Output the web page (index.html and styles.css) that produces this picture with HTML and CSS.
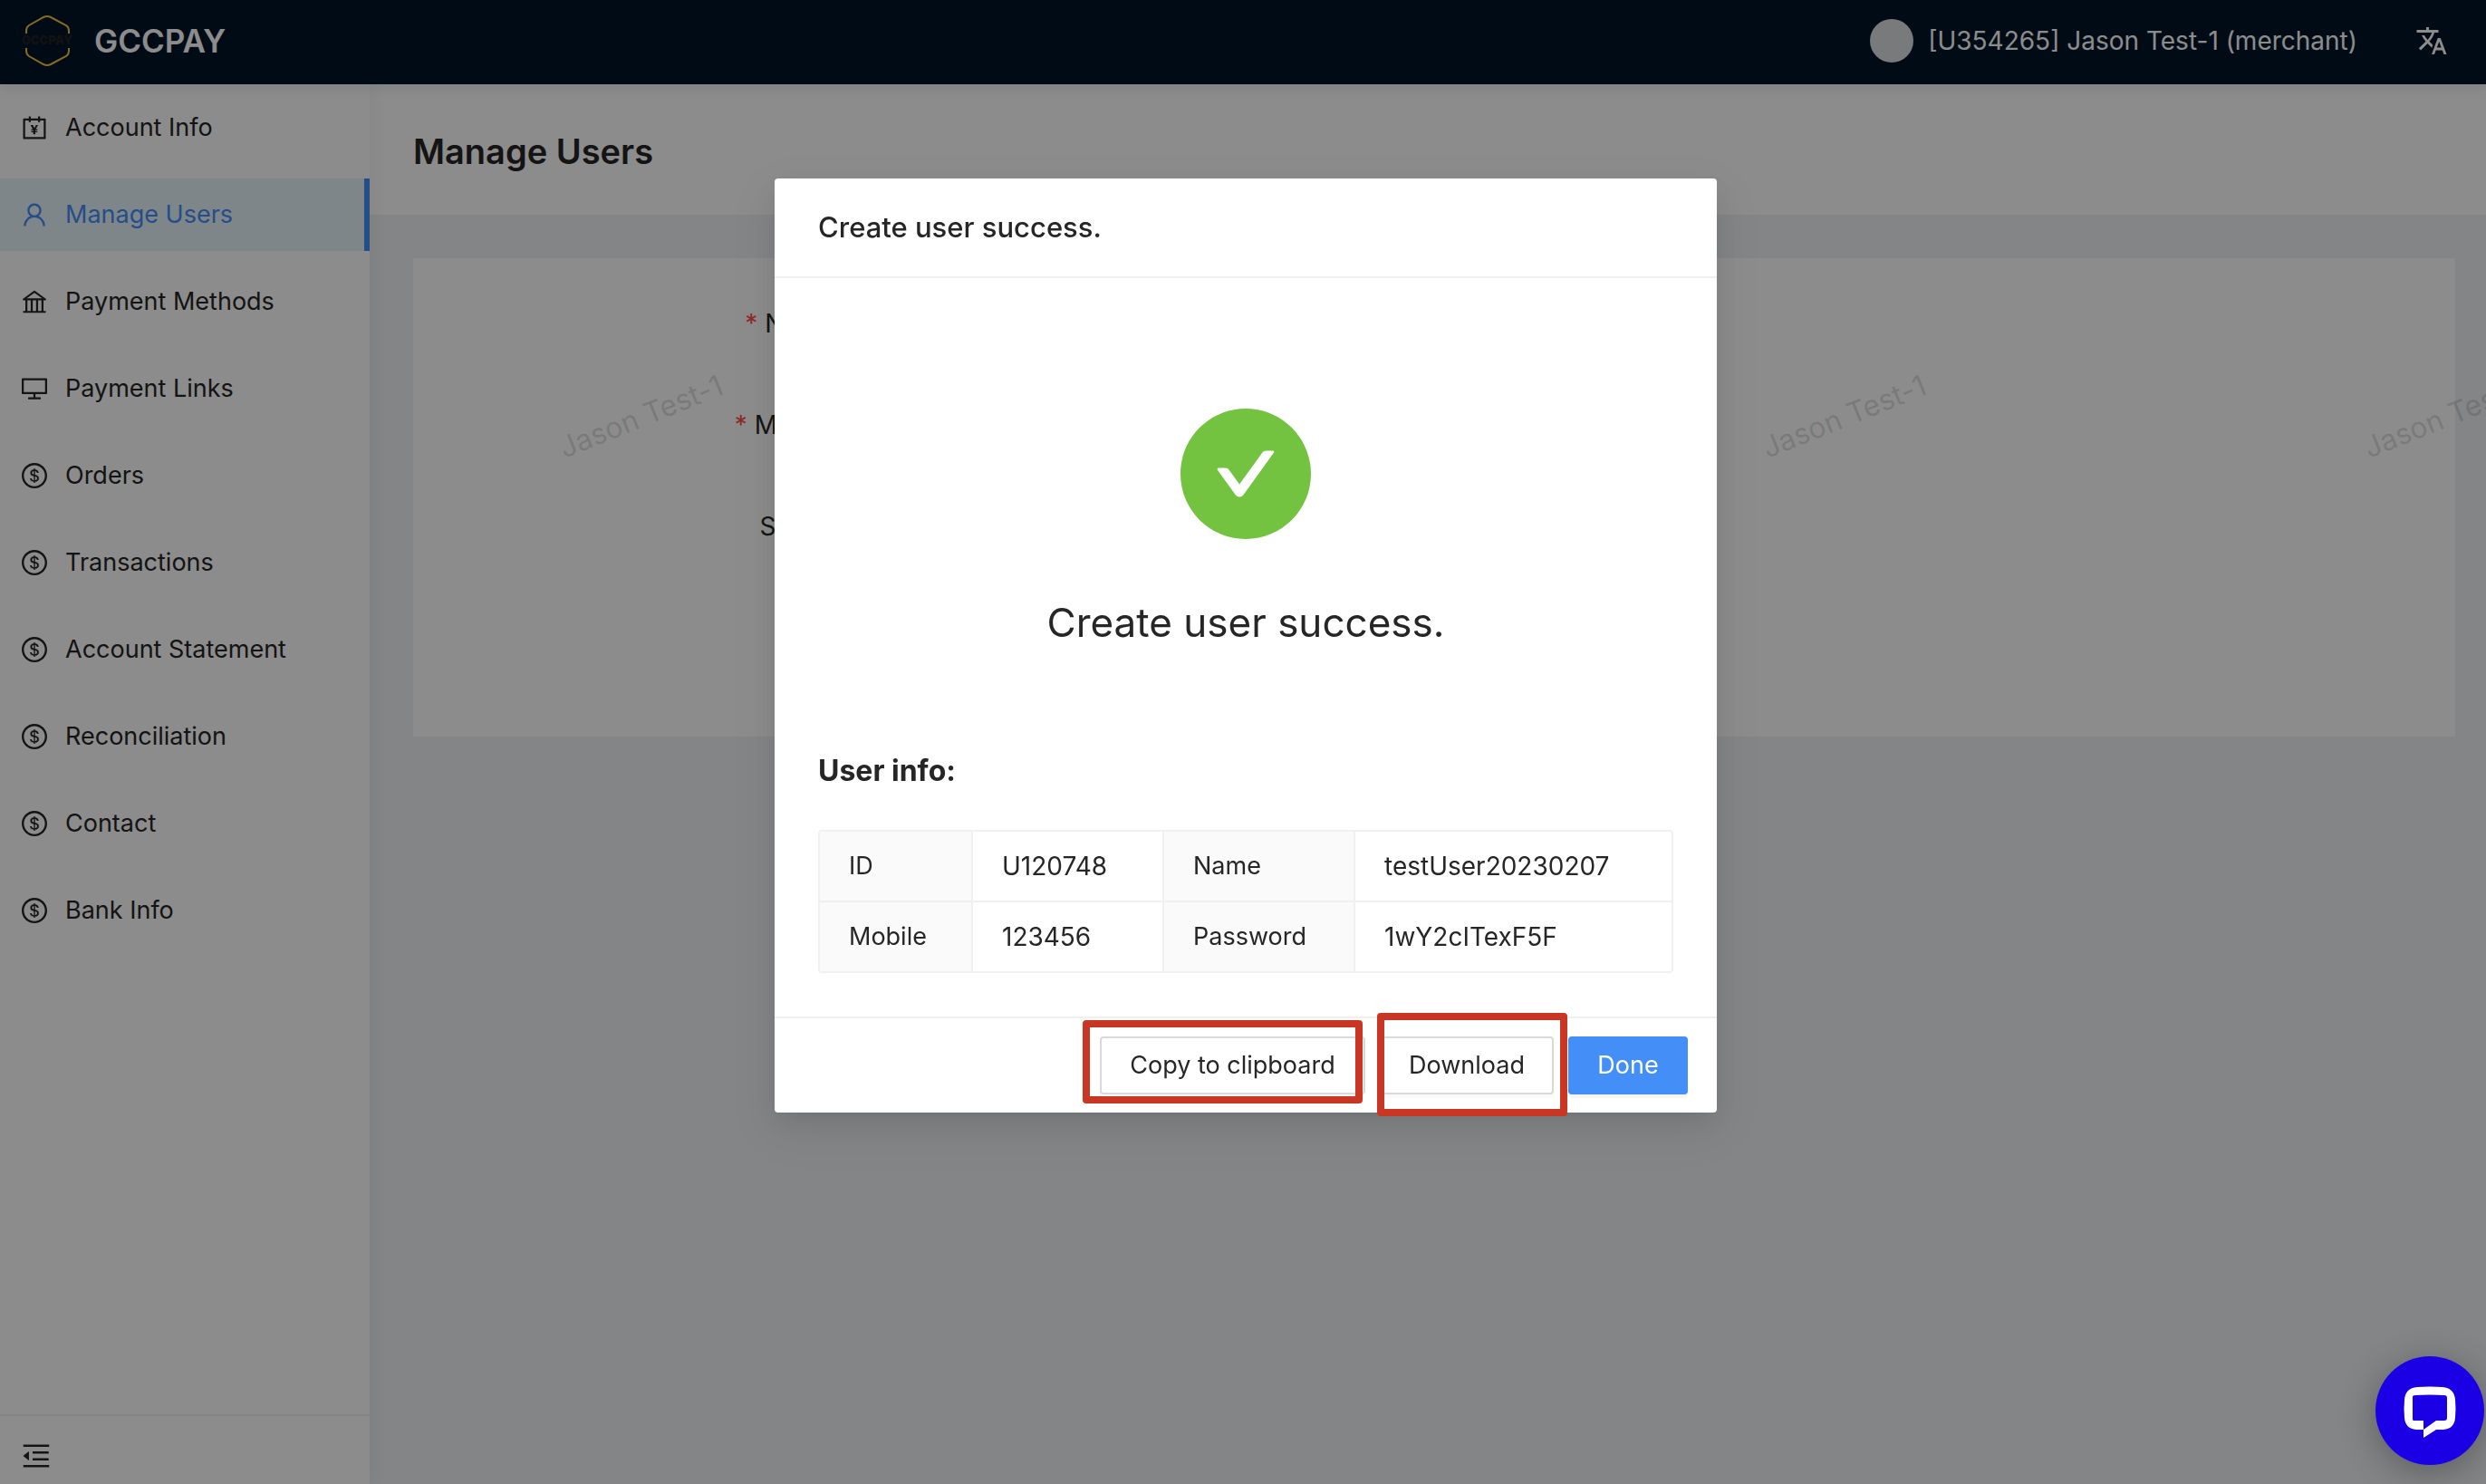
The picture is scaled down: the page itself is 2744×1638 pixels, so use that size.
FILE: index.html
```html
<!DOCTYPE html>
<html lang="en">
<head>
<meta charset="utf-8">
<meta name="viewport" content="width=device-width, initial-scale=1">
<title>GCCPAY - Manage Users</title>
<link rel="stylesheet" href="styles.css">
</head>
<body>
<svg class="sprite" aria-hidden="true">
  <symbol id="i-book" viewBox="64 64 896 896"><path fill-rule="evenodd" d="M880 184H712v-64c0-4.400-3.600-8-8-8h-56c-4.400 0-8 3.600-8 8v64H384v-64c0-4.400-3.600-8-8-8h-56c-4.400 0-8 3.600-8 8v64H144c-17.700 0-32 14.300-32 32v664c0 17.700 14.300 32 32 32h736c17.700 0 32-14.300 32-32V216c0-17.700-14.300-32-32-32zm-40 656H184V256h128v48c0 4.400 3.600 8 8 8h56c4.400 0 8-3.600 8-8v-48h256v48c0 4.400 3.600 8 8 8h56c4.400 0 8-3.600 8-8v-48h128v584z"/><path d="M639.500 414h-65c-3 0-5.800 1.700-7.100 4.400L514.700 518.600h-2.900l-52.700-100.200a8 8 0 00-7.100-4.400h-66.700c-4.400 0-8 3.600-8 8 0 1.300.3 2.700 1 3.800l72.700 131.400h-45.200c-4.400 0-8 3.600-8 8v27.100c0 4.400 3.600 8 8 8h63.800v30.600h-63.800c-4.400 0-8 3.600-8 8V666c0 4.400 3.600 8 8 8h63.800v65.200c0 4.400 3.600 8 8 8h58.800c4.400 0 8-3.600 8-8V674h64.200c4.400 0 8-3.600 8-8v-27.100c0-4.400-3.600-8-8-8h-64.200v-30.600h64.200c4.400 0 8-3.600 8-8v-27.100c0-4.400-3.600-8-8-8h-45.600l72.900-131.300c2.100-3.900.7-11.900-6.300-11.900z"/></symbol>
  <symbol id="i-user" viewBox="64 64 896 896"><path d="M858.500 763.600a374 374 0 00-80.600-119.500 375.630 375.630 0 00-119.500-80.600c-.4-.2-.8-.3-1.200-.5C719.500 518 760 444.700 760 362c0-137-111-248-248-248S264 225 264 362c0 82.700 40.500 156 102.800 201.100-.4.2-.8.3-1.200.5-44.800 18.900-85 46-119.500 80.600a375.630 375.630 0 00-80.600 119.500A371.700 371.700 0 00136 901.800a8 8 0 008 8.200h60c4.400 0 7.900-3.500 8-7.800 2-77.200 33-149.500 87.800-204.300 56.700-56.700 132-87.900 212.200-87.900s155.500 31.200 212.200 87.900C779 752.700 810 825 812 902.200c.1 4.400 3.600 7.800 8 7.800h60a8 8 0 008-8.200c-1-47.800-10.900-94.300-29.500-138.200zM512 534c-45.900 0-89.100-17.900-121.600-50.400S340 407.900 340 362c0-45.900 17.900-89.100 50.400-121.600S466.100 190 512 190s89.100 17.900 121.600 50.400S684 316.100 684 362c0 45.900-17.900 89.100-50.400 121.600S557.900 534 512 534z"/></symbol>
  <symbol id="i-bank" viewBox="64 64 896 896"><path fill-rule="evenodd" d="M894 462c30.900 0 43.800-39.700 18.700-58L530.800 126.200a31.810 31.810 0 00-37.600 0L111.300 404c-25.100 18.200-12.200 58 18.800 58H192v374h-72c-4.400 0-8 3.600-8 8v52c0 4.400 3.600 8 8 8h784c4.400 0 8-3.600 8-8v-52c0-4.400-3.600-8-8-8h-72V462h62zM512 196.700l271.100 197.200H240.900L512 196.700zM264 462h117v374H264V462zm189 0h117v374H453V462zm307 374H642V462h118v374z"/></symbol>
  <symbol id="i-desktop" viewBox="64 64 896 896"><path fill-rule="evenodd" d="M928 140H96c-17.700 0-32 14.300-32 32v496c0 17.700 14.300 32 32 32h380v112H304c-8.800 0-16 7.200-16 16v48c0 4.400 3.600 8 8 8h432c4.400 0 8-3.600 8-8v-48c0-8.800-7.200-16-16-16H548V700h380c17.700 0 32-14.300 32-32V172c0-17.700-14.300-32-32-32zm-40 488H136V212h752v416z"/></symbol>
  <symbol id="i-dollar" viewBox="64 64 896 896"><path d="M512 64C264.600 64 64 264.600 64 512s200.600 448 448 448 448-200.600 448-448S759.400 64 512 64zm0 820c-205.400 0-372-166.600-372-372s166.600-372 372-372 372 166.600 372 372-166.600 372-372 372zm47.700-395.200l-25.400-5.900V348.600c38 5.200 61.500 29 65.500 58.200.5 4 3.900 6.900 7.900 6.900h44.900c4.700 0 8.400-4.100 8-8.800-6.100-62.300-57.400-102.300-125.900-109.200V263c0-4.400-3.600-8-8-8h-28.100c-4.400 0-8 3.600-8 8v33c-70.800 6.900-126.200 46-126.200 119 0 67.600 49.800 100.200 102.100 112.700l24.700 6.300v142.700c-44.200-5.900-69-29.500-74.100-61.300-.6-3.800-4-6.600-7.900-6.600H363c-4.700 0-8.400 4-8 8.700 4.500 55 46.200 105.600 135.200 112.100V761c0 4.400 3.600 8 8 8h28.400c4.400 0 8-3.600 8-8.100l-.2-31.700c78.300-6.900 134.300-48.800 134.300-124-.1-69.400-44.200-100.400-109-116.400zm-68.600-16.200c-5.600-1.600-10.300-3.100-15-5-33.800-12.200-49.500-31.900-49.500-57.300 0-36.300 27.500-57 64.500-61.700v124zM534.300 677V543.300c3.100.9 5.900 1.600 8.800 2.200 47.300 14.400 63.200 34.400 63.200 65.100 0 39.100-29.400 62.600-72 66.400z"/></symbol>
  <symbol id="i-fold" viewBox="64 64 896 896"><path d="M408 442h480c4.400 0 8-3.600 8-8v-56c0-4.400-3.600-8-8-8H408c-4.400 0-8 3.600-8 8v56c0 4.400 3.600 8 8 8zm-8 204c0 4.400 3.600 8 8 8h480c4.400 0 8-3.600 8-8v-56c0-4.400-3.600-8-8-8H408c-4.400 0-8 3.600-8 8v56zm504-486H120c-4.400 0-8 3.600-8 8v56c0 4.400 3.600 8 8 8h784c4.400 0 8-3.600 8-8v-56c0-4.400-3.600-8-8-8zm0 632H120c-4.400 0-8 3.600-8 8v56c0 4.400 3.600 8 8 8h784c4.400 0 8-3.600 8-8v-56c0-4.400-3.600-8-8-8zM115.400 518.900L271.700 642c5.800 4.600 14.400.5 14.400-6.900V388.900c0-7.400-8.500-11.500-14.400-6.900L115.400 505.100a8.740 8.740 0 000 13.800z"/></symbol>
</svg>

<div class="app">
  <header class="topbar">
    <a class="brand" href="#">
      <svg class="brand-logo" viewBox="0 0 56 56" aria-hidden="true">
        <g fill="none" stroke="#f0c63f" stroke-width="2">
          <path d="M5 20V17Q5 13 8 11L24 2Q28 0 32 2L49 11Q52 13 52 17V20"/>
          <path d="M5 36V39Q5 43 8 45L24 54Q28 56 32 54L49 45Q52 43 52 39V36"/>
        </g>
        <text class="brand-mark" x="28" y="32" text-anchor="middle">GCCPAY</text>
      </svg>
      <span class="brand-name">GCCPAY</span>
    </a>
    <div class="account">
      <span class="avatar"></span>
      <span class="account-name">[U354265] Jason Test-1 (merchant)</span>
      <button class="icon-button" type="button" aria-label="Language">
        <svg class="icon-lang" viewBox="0 0 24 24" aria-hidden="true"><path d="M12.870 15.070l-2.540-2.510.03-.03c1.740-1.940 2.980-4.170 3.710-6.530H17V4h-7V2H8v2H1v1.990h11.170C11.500 7.920 10.440 9.750 9 11.350 8.070 10.320 7.300 9.190 6.690 8h-2c.73 1.630 1.730 3.170 2.980 4.560l-5.090 5.020L4 19l5-5 3.110 3.110.76-2.040zM18.500 10h-2L12 22h2l1.120-3h4.750L21 22h2l-4.500-12zm-2.620 7l1.620-4.330L19.120 17h-3.240z"/></svg>
      </button>
    </div>
  </header>

  <aside class="sidebar">
    <nav class="menu">
      <a class="menu-item" href="#"><svg class="icon"><use href="#i-book"/></svg>Account Info</a>
      <a class="menu-item active" href="#"><svg class="icon"><use href="#i-user"/></svg>Manage Users</a>
      <a class="menu-item" href="#"><svg class="icon"><use href="#i-bank"/></svg>Payment Methods</a>
      <a class="menu-item" href="#"><svg class="icon"><use href="#i-desktop"/></svg>Payment Links</a>
      <a class="menu-item" href="#"><svg class="icon"><use href="#i-dollar"/></svg>Orders</a>
      <a class="menu-item" href="#"><svg class="icon"><use href="#i-dollar"/></svg>Transactions</a>
      <a class="menu-item" href="#"><svg class="icon"><use href="#i-dollar"/></svg>Account Statement</a>
      <a class="menu-item" href="#"><svg class="icon"><use href="#i-dollar"/></svg>Reconciliation</a>
      <a class="menu-item" href="#"><svg class="icon"><use href="#i-dollar"/></svg>Contact</a>
      <a class="menu-item" href="#"><svg class="icon"><use href="#i-dollar"/></svg>Bank Info</a>
    </nav>
    <div class="sidebar-foot">
      <button class="icon-button" type="button" aria-label="Collapse menu"><svg class="icon-fold"><use href="#i-fold"/></svg></button>
    </div>
  </aside>

  <main class="main">
    <div class="page-head"><h1 class="page-title">Manage Users</h1></div>
    <div class="content">
      <form class="card">
        <div class="field"><label class="field-label required" for="name">Name:</label><input class="field-input" id="name" type="text"></div>
        <div class="field"><label class="field-label required" for="mobile">Mobile:</label><input class="field-input" id="mobile" type="text"></div>
        <div class="field"><label class="field-label" for="status">Status:</label><input class="field-input" id="status" type="text"></div>
      </form>
      <div class="watermark" aria-hidden="true">
        <span class="watermark-cell"><span class="watermark-text">Jason Test-1</span></span>
        <span class="watermark-cell"><span class="watermark-text">Jason Test-1</span></span>
        <span class="watermark-cell"><span class="watermark-text">Jason Test-1</span></span>
        <span class="watermark-cell"><span class="watermark-text">Jason Test-1</span></span>
      </div>
    </div>
  </main>
</div>

<div class="mask">
  <section class="modal" role="dialog" aria-modal="true" aria-labelledby="modal-title">
    <header class="modal-head"><h2 class="modal-title" id="modal-title">Create user success.</h2></header>
    <div class="modal-body">
      <div class="result">
        <svg class="result-icon" viewBox="64 64 896 896" aria-hidden="true"><path d="M512 64C264.600 64 64 264.600 64 512s200.600 448 448 448 448-200.600 448-448S759.400 64 512 64zm193.500 301.700l-210.600 292a31.800 31.800 0 01-51.700 0L318.500 484.900c-3.800-5.300 0-12.700 6.500-12.700h46.900c10.200 0 19.900 4.900 25.900 13.300l71.200 98.800 157.200-218c6-8.300 15.600-13.300 25.900-13.300H699c6.500 0 10.300 7.400 6.500 12.700z"/></svg>
        <p class="result-title">Create user success.</p>
      </div>
      <h3 class="info-title">User info:</h3>
      <table class="info">
        <colgroup><col class="col-a"><col class="col-b"><col class="col-b"><col></colgroup>
        <tbody>
          <tr><th scope="row">ID</th><td>U120748</td><th scope="row">Name</th><td>testUser20230207</td></tr>
          <tr><th scope="row">Mobile</th><td>123456</td><th scope="row">Password</th><td>1wY2cITexF5F</td></tr>
        </tbody>
      </table>
    </div>
    <footer class="modal-foot">
      <span class="mark mark-copy"><button class="btn btn-copy" type="button">Copy to clipboard</button></span>
      <span class="mark mark-download"><button class="btn btn-download" type="button">Download</button></span>
      <button class="btn btn-primary" type="button">Done</button>
    </footer>
  </section>
</div>

<button class="chat" type="button" aria-label="Chat">
  <svg class="chat-icon" viewBox="0 0 120 120" aria-hidden="true"><path fill-rule="evenodd" d="M46 34Q60 33 74 34Q87 35 88 48Q89 58 88 68Q87 80 75 81H67L53 90V71H42Q41 71 41 69V45Q41 43 44 43Q60 42 76 43Q79 43 79 46V68Q79 71 76 71H67L53 81H45Q33 80 32 68Q31 58 32 48Q33 35 46 34Z"/></svg>
</button>
</body>
</html>
```
FILE: styles.css
```css
* { box-sizing: border-box; }

body {
  margin: 0;
  background: #f0f2f5;
  color: #262626;
  font-family: Inter, "Noto Sans", sans-serif;
  font-size: 28px;
  line-height: 44px;
}

h1, h2, h3, p { margin: 0; }
a { color: inherit; text-decoration: none; }
button, input { font: inherit; color: inherit; }
svg { display: block; fill: currentColor; }
.sprite { display: none; }

.app {
  display: grid;
  grid-template: auto 1fr / 408px minmax(0, 1fr);
  min-height: 100vh;
}

/* Top bar */
.topbar {
  grid-column: 1 / -1;
  z-index: 2;
  display: flex;
  align-items: center;
  justify-content: space-between;
  height: 93px;
  padding: 0 42px 3px 24px;
  background: #001529;
  color: #fff;
  box-shadow: 0 2px 16px rgba(0, 21, 41, .12);
}
.brand { display: flex; align-items: center; gap: 24px; }
.brand-logo { width: 56px; height: 56px; overflow: visible; }
.brand-mark { font-size: 13px; font-weight: 900; fill: #231f20; }
.brand-name { font-size: 35px; font-weight: 600; }
.account { display: flex; align-items: center; gap: 16px; }
.avatar { width: 48px; height: 48px; border-radius: 50%; background: #dddee0; }
.account-name { margin-right: 48px; }
.icon-button { display: block; padding: 0; border: 0; background: none; cursor: pointer; }
.icon-lang { width: 36px; height: 36px; }

/* Sidebar */
.sidebar {
  z-index: 1;
  display: flex;
  flex-direction: column;
  justify-content: space-between;
  background: #fff;
  box-shadow: 4px 0 16px rgba(29, 35, 41, .05);
}
.menu { display: flex; flex-direction: column; gap: 16px; padding: 8px 0; }
.menu-item {
  display: flex;
  align-items: center;
  gap: 20px;
  height: 80px;
  padding-left: 24px;
  font-size: 27px;
}
.menu-item.active {
  background: #e6f4fa;
  color: #448ef7;
  border-right: 6px solid #448ef7;
}
.icon { width: 28px; height: 28px; }
.sidebar-foot { padding: 28px 24px 15px; border-top: 2px solid #f0f0f0; }
.icon-fold { width: 32px; height: 32px; }

/* Page */
.page-head { padding: 46px 48px 42px; background: #fff; }
.page-title { font-size: 38px; font-weight: 600; line-height: 56px; }
.content { position: relative; overflow: hidden; padding: 48px 34px 48px 48px; }
.card {
  display: flex;
  flex-direction: column;
  gap: 48px;
  padding: 40px 48px 200px;
  background: #fff;
}
.field { display: flex; align-items: center; gap: 16px; }
.field-label { flex: 0 0 426px; text-align: right; }
.required::before { content: "*"; margin-right: 8px; color: #ff4d4f; }
.field-input {
  width: 40%;
  height: 64px;
  padding: 8px 22px;
  border: 2px solid #d9d9d9;
  border-radius: 4px;
}
.watermark {
  position: absolute;
  inset: 48px 0 0 48px;
  display: flex;
  pointer-events: none;
}
.watermark-cell { flex: 0 0 664px; padding: 153px 0 0 156px; }
.watermark-text {
  display: inline-block;
  transform: rotate(-22deg);
  color: rgba(0, 0, 0, .15);
  font-size: 32px;
}

/* Modal */
.mask {
  position: fixed;
  inset: 0;
  z-index: 10;
  display: flex;
  align-items: flex-start;
  justify-content: center;
  padding: 197px 0 0 6px;
  background: rgba(0, 0, 0, .45);
}
.modal {
  width: 1040px;
  border-radius: 4px;
  background: #fff;
  box-shadow: 0 6px 12px -8px rgba(0, 0, 0, .12), 0 12px 32px rgba(0, 0, 0, .08), 0 18px 56px 16px rgba(0, 0, 0, .05);
}
.modal-head { padding: 32px 48px; border-bottom: 2px solid #f0f0f0; }
.modal-title { font-size: 31px; font-weight: 500; line-height: 44px; }
.modal-body { padding: 48px; }
.result {
  display: flex;
  flex-direction: column;
  align-items: center;
  gap: 48px;
  padding: 96px 0;
}
.result-icon { width: 144px; height: 144px; color: #73c340; }
.result-title { font-size: 44px; line-height: 88px; }
.info-title { margin-bottom: 41px; font-size: 32px; font-weight: 700; line-height: 48px; }
.info {
  width: 100%;
  table-layout: fixed;
  border: 2px solid #f0f0f0;
  border-radius: 4px;
  border-spacing: 0;
}
.col-a { width: 167px; }
.col-b { width: 211px; }
.info th, .info td { padding: 16px 0 16px 32px; font-weight: 400; text-align: left; }
.info th { background: #fafafa; font-size: 27px; }
.info tr > * + * { border-left: 2px solid #f0f0f0; }
.info tr + tr > * { border-top: 2px solid #f0f0f0; }

.modal-foot {
  display: flex;
  justify-content: flex-end;
  gap: 16px;
  padding: 20px 32px;
  border-top: 2px solid #f0f0f0;
}
.btn {
  display: block;
  height: 64px;
  padding: 0 28px;
  border: 2px solid #d9d9d9;
  border-radius: 4px;
  background: #fff;
  box-shadow: 0 4px 0 rgba(0, 0, 0, .02);
  font-size: 27px;
  white-space: nowrap;
  cursor: pointer;
}
.btn-copy { min-width: 293px; }
.btn-download { min-width: 192px; }
.btn-primary {
  min-width: 132px;
  border-color: #448ef7;
  background: #448ef7;
  color: #fff;
  box-shadow: 0 4px 0 rgba(0, 0, 0, .04);
}

/* Red frames drawn over the two highlighted buttons */
.mark { position: relative; }
.mark::after {
  content: "";
  position: absolute;
  border: 8px solid #c93624;
  border-radius: 4px;
  pointer-events: none;
}
.mark-copy::after { inset: -18px 3px -10px -19px; }
.mark-download::after { inset: -26px -15px -24px -3px; }

/* Chat launcher */
.chat {
  position: fixed;
  right: 2px;
  bottom: 21px;
  z-index: 20;
  width: 120px;
  height: 120px;
  padding: 0;
  border: 0;
  border-radius: 50%;
  background: #1b00e6;
  color: #fff;
  box-shadow: 0 8px 40px rgba(0, 0, 0, .3);
  cursor: pointer;
}
.chat-icon { width: 120px; height: 120px; }
```
